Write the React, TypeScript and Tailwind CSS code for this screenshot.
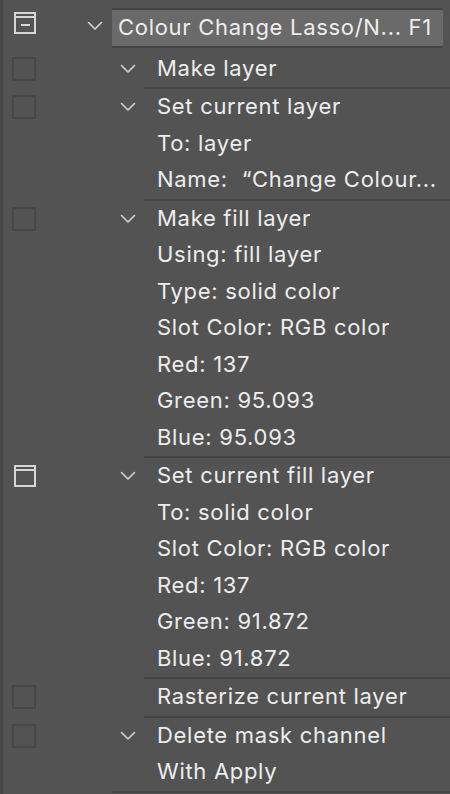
import React from 'react';

type Box = 'empty' | 'window' | 'dialog';

interface StepProps {
  box: Box;
  chevron: boolean;
  lines: string[];
  first?: boolean;
}

function Chevron() {
  return (
    <svg width="16" height="10" viewBox="0 0 16 10" fill="none" className="text-[#d4d4d4]">
      <path d="M1.5 1.5 L8 8 L14.5 1.5" stroke="currentColor" strokeWidth="1.6" strokeLinecap="round" strokeLinejoin="round" />
    </svg>
  );
}

function CheckBox({ box }: { box: Box }) {
  if (box === 'empty') {
    return <div className="w-6 h-6 border-2 border-[#474747]" />;
  }
  return (
    <div className="ml-[2px] w-[22px] h-[22px] border-2 border-[#d6d6d6] flex flex-col items-center">
      <div className="w-full h-[2px] mt-[2px] bg-[#d6d6d6]" />
      {box === 'dialog' && <div className="w-[9px] h-[2px] mt-[6px] bg-[#d6d6d6]" />}
    </div>
  );
}

function Step({ box, chevron, lines, first }: StepProps) {
  return (
    <div className="flex">
      <div className={`w-[141px] shrink-0 flex items-start ${first ? 'pt-[2.5px]' : 'pt-[2px]'}`}>
        <div className="h-[36.5px] flex items-center ml-[9px]">
          <CheckBox box={box} />
        </div>
        <div className="h-[36.5px] flex items-center ml-[84px]">{chevron && <Chevron />}</div>
      </div>
      <div className={`flex-1 ${first ? 'pt-[2.5px]' : 'border-t-2 border-[#444444]'}`}>
        {lines.map((l, i) => (
          <div key={i} className="h-[36.5px] leading-[35px] pl-[13px] whitespace-pre">
            {l}
          </div>
        ))}
      </div>
    </div>
  );
}

const steps: StepProps[] = [
  { box: 'empty', chevron: true, lines: ['Make layer'], first: true },
  { box: 'empty', chevron: true, lines: ['Set current layer', 'To: layer', 'Name:  \u201cChange Colour...'] },
  {
    box: 'empty',
    chevron: true,
    lines: ['Make fill layer', 'Using: fill layer', 'Type: solid color', 'Slot Color: RGB color', 'Red: 137', 'Green: 95.093', 'Blue: 95.093'],
  },
  {
    box: 'window',
    chevron: true,
    lines: ['Set current fill layer', 'To: solid color', 'Slot Color: RGB color', 'Red: 137', 'Green: 91.872', 'Blue: 91.872'],
  },
  { box: 'empty', chevron: false, lines: ['Rasterize current layer'] },
  { box: 'empty', chevron: true, lines: ['Delete mask channel', 'With Apply'] },
];

export default function App() {
  return (
    <div
      className="w-[450px] h-[794px] overflow-hidden bg-[#535353] text-[#ededed] text-[22px] tracking-[0.7px] border-l-[3px] border-[#474747]"
      style={{ fontFamily: 'Inter, "Noto Sans", sans-serif' }}
    >
      <div className="pt-2">
        <div className="flex">
          <div className="w-[109px] shrink-0 flex items-start">
            <div className="ml-[9px] mt-[4px]">
              <CheckBox box="dialog" />
            </div>
            <div className="ml-[51px] mt-[13px]">
              <Chevron />
            </div>
          </div>
          <div className="w-[331px] border-y-2 border-[#444444]">
            <div className="h-[36px] leading-[35px] bg-[#6a6a6a] pl-[6px] whitespace-pre">
              Colour Change Lasso/N... F1
            </div>
          </div>
        </div>
        <div className="ml-[109px] border-b-2 border-[#444444]">
          <div className="-ml-[109px]">
            {steps.map((s, i) => (
              <Step key={i} {...s} />
            ))}
          </div>
        </div>
      </div>
    </div>
  );
}
